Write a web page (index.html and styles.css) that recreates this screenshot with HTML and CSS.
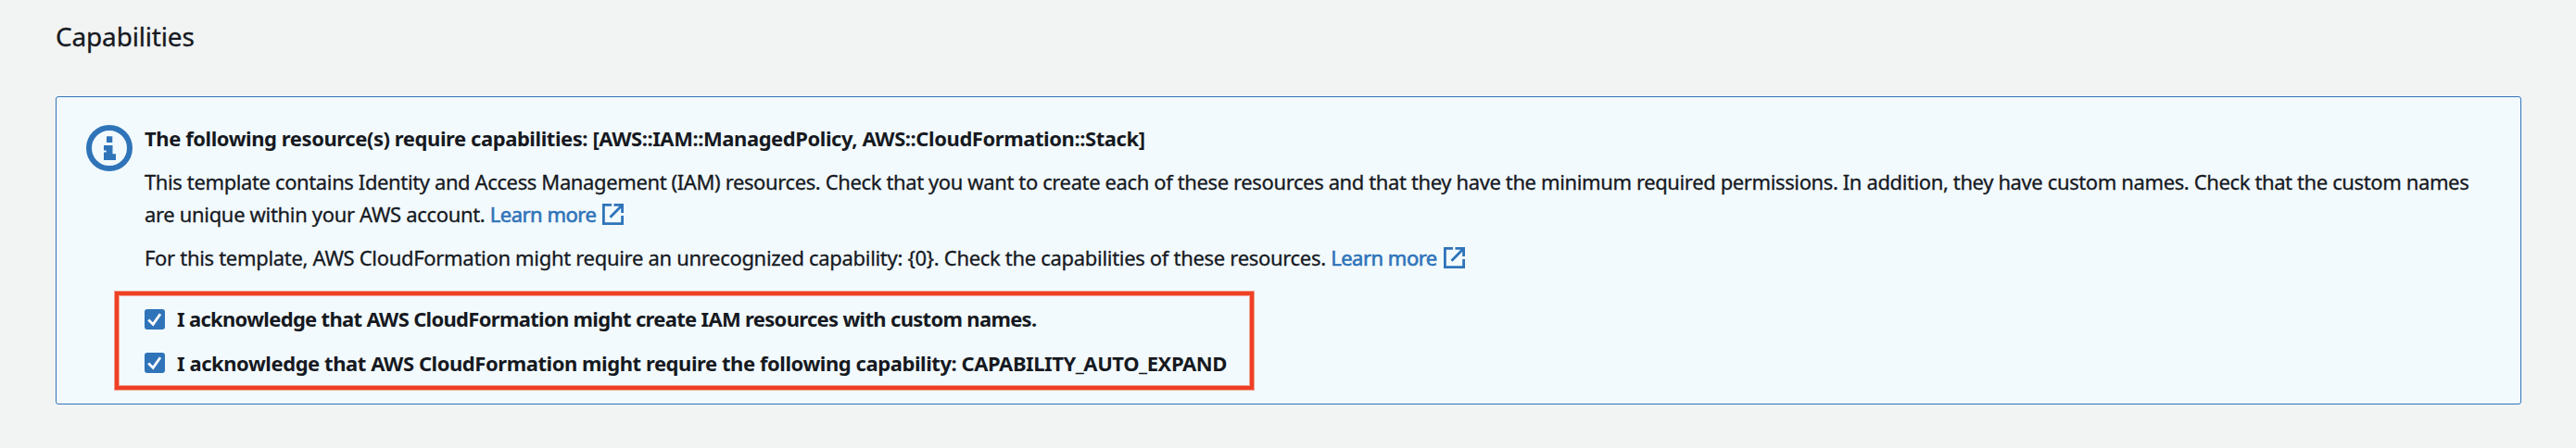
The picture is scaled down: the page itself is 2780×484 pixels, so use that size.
FILE: index.html
```
<!DOCTYPE html>
<html lang="en">
<head>
<meta charset="utf-8">
<title>Capabilities</title>
<link rel="stylesheet" href="styles.css">
</head>
<body>
<svg class="defs" width="0" height="0">
  <symbol id="external" viewBox="0 0 23 23">
    <path d="M10 1.400H1.400V21.600H21.600V13M12.500 1.400H21.600V10M21 2L8.500 14.800" fill="none" stroke="currentColor" stroke-width="2.8"/>
  </symbol>
  <symbol id="check" viewBox="0 0 22 22">
    <path d="M4.200 11.600L9.200 16.400L17 5.200" fill="none" stroke="#fff" stroke-width="2.8"/>
  </symbol>
</svg>
<main class="page">
  <h2 class="heading">Capabilities</h2>
  <section class="alert">
    <svg class="info" viewBox="0 0 50 50">
      <circle cx="25" cy="25" r="22" fill="none" stroke="currentColor" stroke-width="6"/>
      <path d="M22 12.300h6.300v6.700h-6.300zM19 22h9.500v9.300h3.500v6.700h-13v-8.500h2.700v-2h-2.700z" fill="currentColor"/>
    </svg>
    <div class="content">
      <h3 class="title">The following resource(s) require capabilities: [AWS::IAM::ManagedPolicy, AWS::CloudFormation::Stack]</h3>
      <p class="text iam">This template contains Identity and Access Management (IAM) resources. Check that you want to create each of these resources and that they have the minimum required permissions. In addition, they have custom names. Check that the custom names<br><span class="account">are unique within your AWS account. </span><a class="link" href="#">Learn more<svg class="external"><use href="#external"/></svg></a></p>
      <p class="text unrecognized">For this template, AWS CloudFormation might require an unrecognized capability: {0}. Check the capabilities of these resources. <a class="link" href="#">Learn more<svg class="external"><use href="#external"/></svg></a></p>
      <div class="acks">
        <label class="ack names"><svg class="box"><use href="#check"/></svg><span>I acknowledge that AWS CloudFormation might create IAM resources with custom names.</span></label>
        <label class="ack expand"><svg class="box"><use href="#check"/></svg><span>I acknowledge that AWS CloudFormation might require the following capability: CAPABILITY_AUTO_EXPAND</span></label>
      </div>
    </div>
  </section>
</main>
</body>
</html>
```
FILE: styles.css
```
* { box-sizing: border-box; }
body {
  margin: 0;
  background: #f2f3f3;
  color: #16191f;
  font-family: "Noto Sans", sans-serif;
  font-size: 22px;
  line-height: 35px;
}
.defs { display: block; width: 0; height: 0; }
.page { padding: 19px 59px 0 60px; }
.heading {
  margin: 0 0 45px;
  font-size: 28px;
  line-height: 40px;
  font-weight: 400;
  letter-spacing: -0.17px;
  -webkit-text-stroke: 0.3px;
}
.alert {
  display: flex;
  height: 333px;
  padding: 27px 32px;
  border: 1px solid #2f74b9;
  border-radius: 3px;
  background: #f2fafd;
}
.info { flex: none; width: 50px; height: 50px; margin: 3px 13px 0 0; color: #2f74b9; }
.content { flex: 1; white-space: nowrap; }
.title { margin: 0 0 12px; font-size: 22px; font-weight: 700; letter-spacing: -0.43px; }
.text { margin: 0 0 12px; -webkit-text-stroke: 0.3px; }
.iam { letter-spacing: -0.38px; }
.account { letter-spacing: -0.33px; }
.unrecognized { letter-spacing: -0.31px; }
.link { color: #2f74b9; text-decoration: none; letter-spacing: -0.5px; -webkit-text-stroke: 0.6px; }
.external { width: 23px; height: 23px; margin-left: 7px; vertical-align: -3px; }
.acks {
  display: flex;
  flex-direction: column;
  gap: 13px;
  width: 1229px;
  height: 106px;
  margin: 19px 0 0 -32px;
  padding: 8px 28px;
  border: 4px solid #ee4024;
  box-shadow: 0 0 0 1px #f2a093, inset 0 0 0 1px #f2a093;
}
.ack { display: flex; align-items: flex-start; gap: 13px; height: 35px; font-weight: 700; }
.names { letter-spacing: -0.69px; }
.expand { letter-spacing: -0.44px; }
.box { flex: none; width: 22px; height: 22px; margin-top: 7px; border-radius: 3px; background: #2f74b9; }
.expand .box { margin-top: 6px; }
```
